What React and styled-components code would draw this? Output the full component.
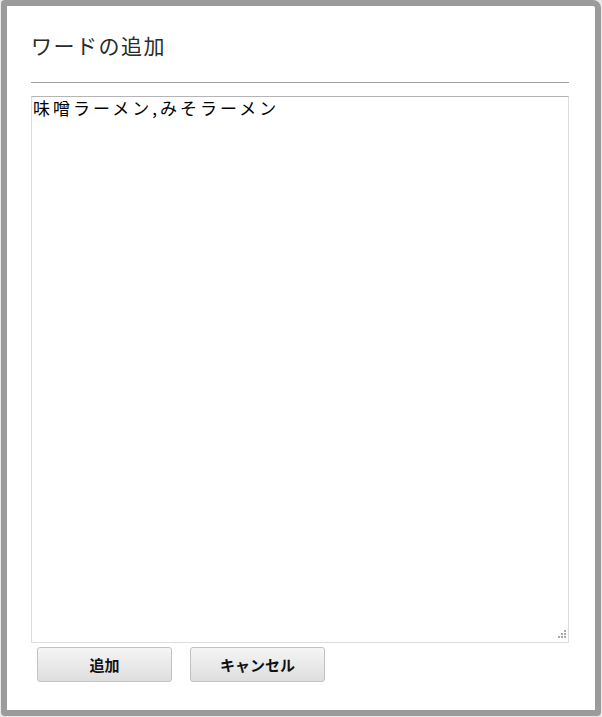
import React from "react";
import styled, { createGlobalStyle } from "styled-components";

const Global = createGlobalStyle`
  html, body { margin: 0; padding: 0; }
  body {
    background: #e9e9e9;
    font-family: "Noto Sans CJK JP", "Liberation Sans", sans-serif;
  }
`;

const Page = styled.div`
  width: 602px;
  height: 717px;
  padding: 0 1px 0 1px;
  box-sizing: border-box;
`;

const Dialog = styled.div`
  width: 600px;
  height: 716px;
  box-sizing: border-box;
  background: #fff;
  border: 6px solid #9b9b9b;
  border-radius: 4px 8px 4px 4px;
  padding: 24px 26px 0 24px;
  display: flex;
  flex-direction: column;
`;

const Title = styled.h2`
  margin: 0;
  font-weight: 400;
  font-size: 21px;
  letter-spacing: 1.5px;
  line-height: 30px;
  color: #2b2b2b;
  font-family: "Noto Sans CJK JP", sans-serif;
`;

const Rule = styled.hr`
  margin: 22px 0 13px;
  border: 0;
  border-top: 1px solid #a0a0a0;
  height: 0;
`;

const AreaWrap = styled.div`
  position: relative;
  height: 547px;
`;

const TextArea = styled.textarea`
  width: 100%;
  height: 100%;
  box-sizing: border-box;
  margin: 0;
  border: 1px solid #dcdce0;
  border-top-color: #b4b4b8;
  padding: 1px 1px;
  resize: none;
  outline: none;
  font-family: "Noto Sans CJK JP", monospace;
  font-size: 17px;
  line-height: 20px;
  letter-spacing: 3px;
  color: #000;
`;

const Grip = styled.svg`
  position: absolute;
  right: 3px;
  bottom: 3px;
  width: 10px;
  height: 10px;
`;

const Buttons = styled.div`
  display: flex;
  gap: 18px;
  padding: 4px 0 0 6px;
`;

const Button = styled.button`
  width: 135px;
  height: 35px;
  box-sizing: border-box;
  border: 1px solid #c2c2c2;
  border-radius: 3px;
  background: linear-gradient(#f5f5f5, #dedede);
  font-family: "Noto Sans CJK JP", sans-serif;
  font-weight: 700;
  font-size: 15px;
  color: #111;
  padding: 0;
`;

export default function App() {
  return (
    <>
      <Global />
      <Page>
        <Dialog>
          <Title>ワードの追加</Title>
          <Rule />
          <AreaWrap>
            <TextArea defaultValue="味噌ラーメン,みそラーメン" />
            <Grip viewBox="0 0 10 10">
              {[[8, 0], [5, 3], [8, 3], [2, 6], [5, 6], [8, 6]].map(([x, y], i) => (
                <rect key={i} x={x} y={y} width="2" height="2" fill="#aaa" />
              ))}
            </Grip>
          </AreaWrap>
          <Buttons>
            <Button>追加</Button>
            <Button>キャンセル</Button>
          </Buttons>
        </Dialog>
      </Page>
    </>
  );
}
